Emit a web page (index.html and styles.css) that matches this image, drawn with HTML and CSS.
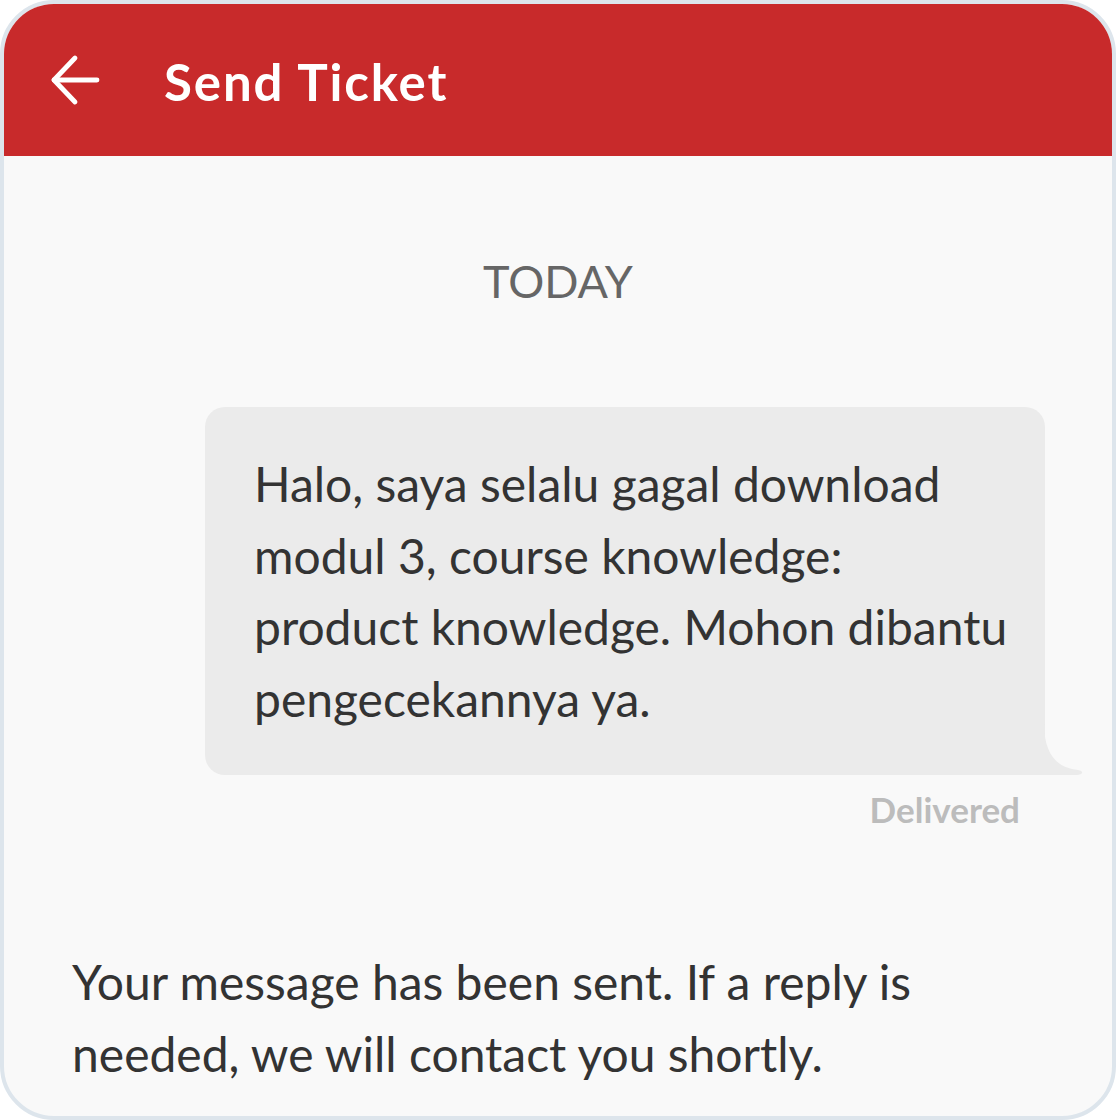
FILE: index.html
```html
<!DOCTYPE html>
<html lang="en">
  <head>
    <meta charset="UTF-8" />
    <meta name="viewport" content="width=device-width, initial-scale=1.0" />
    <title>Send Ticket</title>
    <link rel="stylesheet" href="styles.css">
  </head>
  <body>
    <main class="frame">
      <!-- Header -->
      <header class="topbar">
        <button class="back" type="button" aria-label="Back">
          <svg width="52" height="52" viewBox="0 0 52 52" fill="none" stroke="#fff" stroke-width="4.8" stroke-linecap="round" stroke-linejoin="round">
            <path d="M47 26H4" />
            <path d="M25 4L4 26L25 48" />
          </svg>
        </button>
        <h1>Send Ticket</h1>
      </header>

      <!-- Conversation -->
      <section class="chat">
        <p class="day">TODAY</p>

        <div class="bubble-row">
          <div class="bubble">
            Halo, saya selalu gagal download modul 3, course knowledge: product knowledge. Mohon dibantu pengecekannya ya.
            <svg class="tail" width="40" height="52" viewBox="0 0 40 52">
              <path d="M0 0 Q0 44 34 47 Q39 48 38 50 Q37 52 30 52 L0 52 Z" fill="#ebebeb" />
            </svg>
          </div>
          <span class="status">Delivered</span>
        </div>

        <p class="notice">Your message has been sent. If a reply is needed, we will contact you shortly.</p>
      </section>
    </main>
  </body>
</html>
```

FILE: styles.css
```css
:root {
  --brand: #c82a2b;
  --bg: #f9f9f9;
  --frame: #dde5ec;
  --bubble: #ebebeb;
  --text: #333333;
  --muted: #666666;
  --faint: #bcbcbc;
}

* {
  margin: 0;
  padding: 0;
  box-sizing: border-box;
}

body {
  width: 1116px;
  height: 1120px;
  background: #ffffff;
  font-family: Lato, 'Open Sans', sans-serif;
  color: var(--text);
}

.frame {
  width: 1116px;
  height: 1120px;
  border: 4px solid var(--frame);
  border-radius: 54px;
  overflow: hidden;
  background: var(--bg);
  display: flex;
  flex-direction: column;
}

.topbar {
  height: 152px;
  background: var(--brand);
  display: flex;
  align-items: center;
  padding-left: 46px;
  gap: 62px;
}

.back {
  background: none;
  border: none;
  display: flex;
  cursor: pointer;
}

.topbar h1 {
  color: #ffffff;
  font-size: 51px;
  line-height: 60px;
  font-weight: 700;
  letter-spacing: 1.9px;
  margin-top: 4px;
}

.chat {
  flex: 1;
  display: flex;
  flex-direction: column;
}

.day {
  margin-top: 100px;
  text-align: center;
  font-size: 45px;
  line-height: 50px;
  color: var(--muted);
}

.bubble-row {
  margin-top: 101px;
  display: flex;
  flex-direction: column;
  align-items: flex-end;
  padding-right: 67px;
}

.bubble {
  position: relative;
  width: 840px;
  padding: 41px 34px 41px 49px;
  background: var(--bubble);
  border-radius: 20px 20px 0 20px;
  font-size: 48px;
  line-height: 71.5px;
}

.tail {
  position: absolute;
  right: -39px;
  bottom: 0;
}

.status {
  margin-top: 13px;
  margin-right: 25px;
  font-size: 35px;
  line-height: 42px;
  font-weight: 700;
  color: var(--faint);
}

.notice {
  margin-top: 116px;
  padding: 0 60px 0 68px;
  font-size: 48px;
  line-height: 71.5px;
}
```
